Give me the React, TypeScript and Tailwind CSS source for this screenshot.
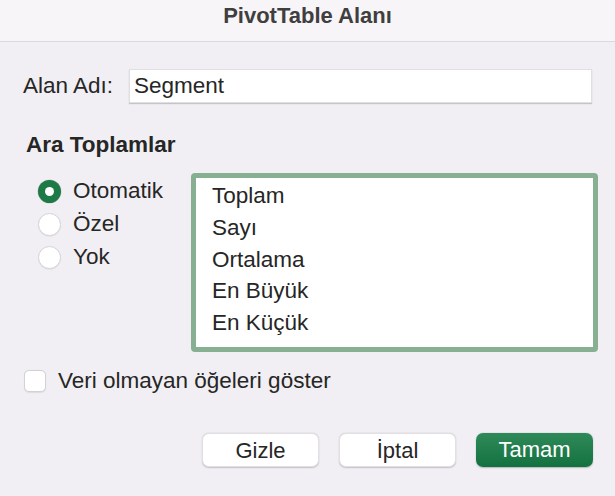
import React from "react";

const items = ["Toplam", "Sayı", "Ortalama", "En Büyük", "En Küçük"];

function Radio({ checked, label }: { checked?: boolean; label: string }) {
  return (
    <div className="flex items-center h-[33px]">
      {checked ? (
        <span className="w-[23px] h-[23px] rounded-full bg-[#1b7a45] flex items-center justify-center shadow-[0_0_0_0.5px_rgba(0,0,0,0.15)]">
          <span className="w-[9px] h-[9px] rounded-full bg-white" />
        </span>
      ) : (
        <span className="w-[23px] h-[23px] rounded-full bg-white border border-[#d6d4d8] shadow-[0_0.5px_1px_rgba(0,0,0,0.08)]" />
      )}
      <span className="ml-[12px] text-[22.5px] leading-none">{label}</span>
    </div>
  );
}

function Button({ label, primary }: { label: string; primary?: boolean }) {
  return (
    <button
      className={
        primary
          ? "w-[117px] h-[34px] rounded-[7px] text-[22px] text-white bg-gradient-to-b from-[#2f8a5a] to-[#127140] shadow-[0_0.5px_1.5px_rgba(0,0,0,0.25)]"
          : "w-[117px] h-[34px] rounded-[7px] text-[22px] text-[#262626] bg-white border border-[#e2e0e4] shadow-[0_0.5px_1.5px_rgba(0,0,0,0.2)]"
      }
    >
      {label}
    </button>
  );
}

export default function App() {
  return (
    <div className="w-[615px] h-[496px] bg-[#f1eff3] text-[#262626] font-['Liberation_Sans',Arial,sans-serif] overflow-hidden">
      <div className="h-[42px] bg-[#f8f5f8] border-b border-[#dad8db] flex justify-center pt-[4px]">
        <span className="text-[22px] font-bold text-[#3f3f3f] leading-[24px]">PivotTable Alanı</span>
      </div>

      <div className="flex items-center mt-[27px] pl-[23px]">
        <span className="text-[22.5px] leading-none w-[106px]">Alan Adı:</span>
        <div className="w-[463px] h-[34px] bg-white border border-[#e0dee2] shadow-[0_1px_1px_rgba(0,0,0,0.18)] flex items-center pl-[4px]">
          <span className="text-[22.5px] leading-none">Segment</span>
        </div>
      </div>

      <div className="mt-[29px] pl-[26px] text-[22.5px] font-bold leading-[25px]">Ara Toplamlar</div>

      <div className="flex mt-[16px]">
        <div className="pl-[38px] pt-[2px] w-[191px]">
          <Radio checked label="Otomatik" />
          <Radio label="Özel" />
          <Radio label="Yok" />
        </div>
        <div className="w-[407px] h-[179px] rounded-[4px] border-[5px] border-[#87b093] bg-white pt-[2px] pl-[16px]">
          {items.map((t) => (
            <div key={t} className="text-[22.5px] leading-[31.75px]">
              {t}
            </div>
          ))}
        </div>
      </div>

      <div className="flex items-center mt-[18px] pl-[24px]">
        <span className="w-[22px] h-[22px] rounded-[5px] bg-white border border-[#d3d1d5] shadow-[0_0.5px_1px_rgba(0,0,0,0.08)]" />
        <span className="ml-[12px] text-[22.5px] leading-none">Veri olmayan öğeleri göster</span>
      </div>

      <div className="flex justify-end gap-[20px] pr-[22px] mt-[40px]">
        <Button label="Gizle" />
        <Button label="İptal" />
        <Button label="Tamam" primary />
      </div>
    </div>
  );
}
